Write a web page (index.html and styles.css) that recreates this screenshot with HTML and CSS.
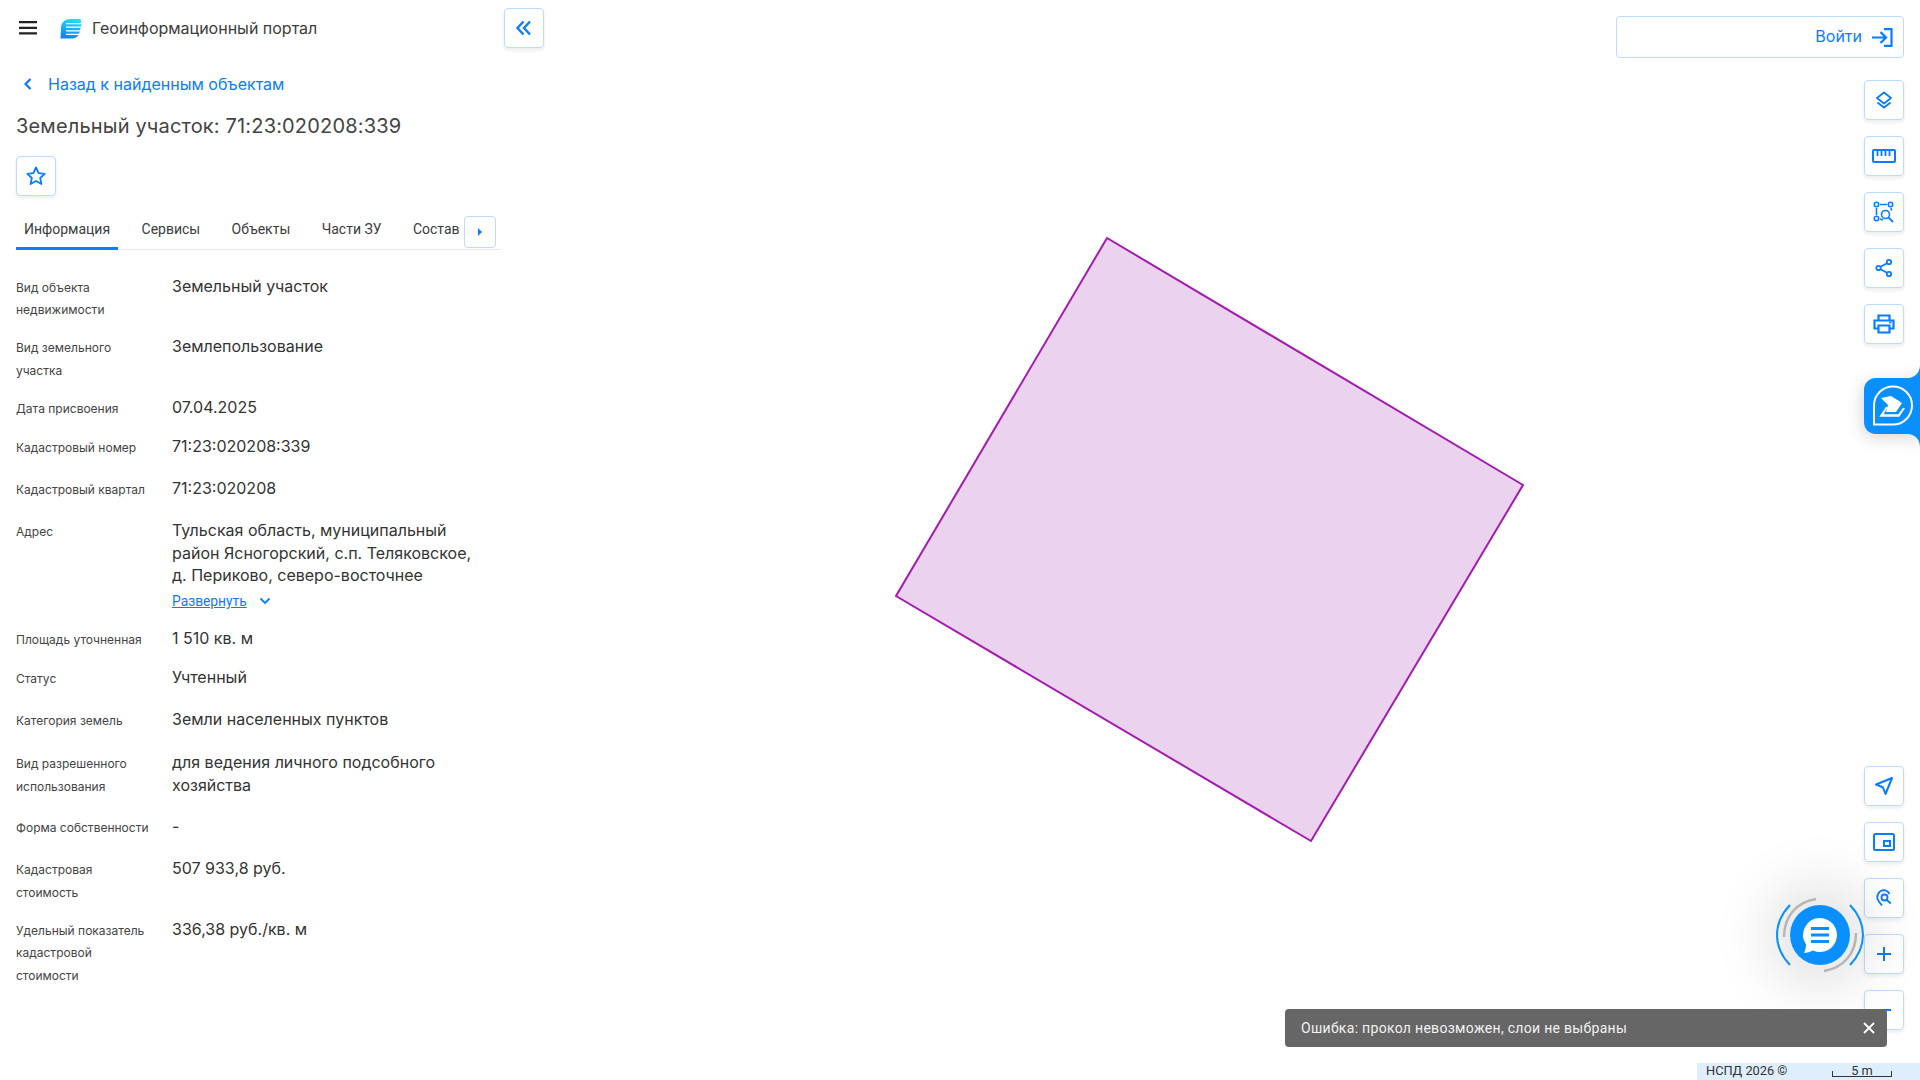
FILE: index.html
```html
<!doctype html>
<html>
    <head>
        <meta charset="utf-8">
        <title>Геоинформационный портал</title>
        <link rel="stylesheet" href="styles.css">
    </head>
    <body>
        <div class="panel">
            <div class="top_bar">
                <svg class="menu_icon" width="18" height="14" viewBox="0 0 18 14"><path d="M0 1.200h18M0 6.800h18M0 12.400h18" stroke="#222" stroke-width="2.300"/></svg>
                <svg class="logo" width="22" height="21" viewBox="0 0 22 21">
                    <defs><linearGradient id="logo_grad" x1="0.600" y1="0" x2="0.300" y2="1"><stop offset="0" stop-color="#22e0ee"/><stop offset="1" stop-color="#0a80ff"/></linearGradient></defs>
                    <path d="M20.500 1H10.500C5 1 1.500 4.500 1 9L.5 20.500H12C15.500 20.500 18 18.500 19 16L20 12.500 21.500 6.500Z" fill="url(#logo_grad)"/>
                    <path d="M6 5.600H22M6 9.200H22M6 12.800H22M6 16.400H22" stroke="#fff" stroke-width="1.200"/>
                </svg>
                <span class="portal_name">Геоинформационный портал</span>
            </div>
            <a class="back_link">
                <svg width="10" height="14" viewBox="0 0 10 14"><path d="M7.500 2L2.500 7l5 5" fill="none" stroke="#0a7cff" stroke-width="2.200"/></svg>
                <span>Назад к найденным объектам</span>
            </a>
            <h1 class="object_title">Земельный участок: 71:23:020208:339</h1>
            <div class="icon_btn star_btn">
                <svg width="22" height="22" viewBox="0 0 22 22"><path d="M11 2.500l2.600 5.600 6.100.7-4.500 4.200 1.200 6-5.400-3-5.400 3 1.200-6-4.500-4.200 6.100-.7z" fill="none" stroke="#0a7cff" stroke-width="1.800" stroke-linejoin="round"/></svg>
            </div>
            <div class="tabs">
                <div class="tab tab_active">Информация</div>
                <div class="tab">Сервисы</div>
                <div class="tab">Объекты</div>
                <div class="tab">Части ЗУ</div>
                <div class="tab tab_clipped">Состав</div>
                <div class="tabs_next">
                    <svg width="6" height="10" viewBox="0 0 6 10"><path d="M1 1l4 4-4 4z" fill="#0a7cff"/></svg>
                </div>
            </div>
            <div class="info_list">
                <div class="row">
                    <div class="row_label">Вид объекта<br>недвижимости</div>
                    <div class="row_value">Земельный участок</div>
                </div>
                <div class="row">
                    <div class="row_label">Вид земельного<br>участка</div>
                    <div class="row_value">Землепользование</div>
                </div>
                <div class="row">
                    <div class="row_label">Дата присвоения</div>
                    <div class="row_value">07.04.2025</div>
                </div>
                <div class="row row_tall">
                    <div class="row_label">Кадастровый номер</div>
                    <div class="row_value">71:23:020208:339</div>
                </div>
                <div class="row row_tall">
                    <div class="row_label">Кадастровый квартал</div>
                    <div class="row_value">71:23:020208</div>
                </div>
                <div class="row">
                    <div class="row_label">Адрес</div>
                    <div class="row_value">
                        Тульская область, муниципальный район Ясногорский, с.п. Теляковское, д. Периково, северо-восточнее
                        <div class="expand">
                            <a class="expand_link">Развернуть</a>
                            <svg width="12" height="8" viewBox="0 0 12 8"><path d="M1.500 1.500L6 6l4.500-4.500" fill="none" stroke="#0a7cff" stroke-width="1.800"/></svg>
                        </div>
                    </div>
                </div>
                <div class="row">
                    <div class="row_label">Площадь уточненная</div>
                    <div class="row_value">1 510 кв. м</div>
                </div>
                <div class="row row_tall">
                    <div class="row_label">Статус</div>
                    <div class="row_value">Учтенный</div>
                </div>
                <div class="row row_loose">
                    <div class="row_label">Категория земель</div>
                    <div class="row_value">Земли населенных пунктов</div>
                </div>
                <div class="row row_wide">
                    <div class="row_label">Вид разрешенного<br>использования</div>
                    <div class="row_value">для ведения личного подсобного хозяйства</div>
                </div>
                <div class="row row_tall">
                    <div class="row_label">Форма собственности</div>
                    <div class="row_value">-</div>
                </div>
                <div class="row">
                    <div class="row_label">Кадастровая<br>стоимость</div>
                    <div class="row_value">507 933,8 руб.</div>
                </div>
                <div class="row">
                    <div class="row_label">Удельный показатель<br>кадастровой<br>стоимости</div>
                    <div class="row_value">336,38 руб./кв. м</div>
                </div>
            </div>
        </div>

        <div class="map">
            <svg class="parcel" width="1920" height="1080" viewBox="0 0 1920 1080">
                <polygon points="1107,238 1523,485 1311,841 896,596" fill="#ebd3ef" stroke="#a31caf" stroke-width="2"/>
            </svg>

            <div class="icon_btn collapse_btn">
                <svg width="20" height="20" viewBox="0 0 20 20"><path d="M9.500 3.500L3.500 10l6 6.500M16 3.500L10 10l6 6.500" fill="none" stroke="#0a7cff" stroke-width="2.400"/></svg>
            </div>

            <div class="login_btn">
                <span class="login_text">Войти</span>
                <svg width="21" height="19" viewBox="0 0 21 19"><path d="M0 9.500h13M8.500 4l5.500 5.500L8.500 15M12 1.200h7.500v16.600H12" fill="none" stroke="#0a7cff" stroke-width="2.200"/></svg>
            </div>

            <div class="tool_stack tools_top">
                <div class="icon_btn">
                    <svg width="18" height="18" viewBox="0 0 18 18"><path d="M9 1.500L16 7l-7 5.500L2 7z" fill="none" stroke="#0a7cff" stroke-width="1.800" stroke-linejoin="round"/><path d="M2.500 11.500L9 16.500l6.500-5" fill="none" stroke="#0a7cff" stroke-width="1.800"/></svg>
                </div>
                <div class="icon_btn">
                    <svg width="24" height="14" viewBox="0 0 24 14"><rect x="1" y="1" width="22" height="12" rx="1" fill="none" stroke="#0a7cff" stroke-width="2"/><path d="M5.500 2v5M9.500 2v5M13.500 2v5M17.500 2v5" stroke="#0a7cff" stroke-width="1.800"/></svg>
                </div>
                <div class="icon_btn">
                    <svg width="22" height="22" viewBox="0 0 22 22" fill="none" stroke="#0a7cff" stroke-width="1.600"><circle cx="3.500" cy="3.500" r="2.200"/><circle cx="17.500" cy="3.500" r="2.200"/><circle cx="3.500" cy="17.500" r="2.200"/><path d="M7 3.500h7M3.500 7v7M18 7l.5 2.500M7 18l3 1"/><circle cx="12.500" cy="13.500" r="4"/><path d="M15.500 16.500l4.500 4.500" stroke-width="1.800"/></svg>
                </div>
                <div class="icon_btn">
                    <svg width="18" height="20" viewBox="0 0 18 20" fill="none" stroke="#0a7cff" stroke-width="1.800"><circle cx="14" cy="4" r="2.200"/><circle cx="14" cy="16" r="2.200"/><circle cx="3.500" cy="10" r="2.200"/><path d="M12 5.200L5.500 8.800M5.500 11.200l6.500 3.600"/></svg>
                </div>
                <div class="icon_btn">
                    <svg width="22" height="20" viewBox="0 0 22 20" fill="none" stroke="#0a7cff" stroke-width="2.200"><path d="M5.500 6V1.500h11V6M5.500 14.500H1.500V6.500h19v8h-4"/><path d="M5.500 11.500h11v7h-11z"/><path d="M16 8.500h2.500" stroke-width="1.600"/></svg>
                </div>
            </div>

            <div class="gos_badge">
                <svg width="56" height="82" viewBox="0 0 56 82">
                    <path d="M56 0V82C56 74 50 69 44 69H12C5 69 0 64 0 57V25C0 18 5 13 12 13H44C50 13 56 8 56 0Z" fill="#0a8fff"/>
                    <path d="M10 59.500V40.500A19 19 0 1 1 29 59.500Z" fill="none" stroke="#fff" stroke-width="2"/>
                    <path d="M17 33L27 31 35 36 38 38 32 47H22L24 40Z" fill="#fff"/>
                    <path d="M22 41.700L15.300 51.700H35.300L41 43.300 39 42.700 34.300 49.300H19.700L23.700 42.300Z" fill="#fff"/>
                </svg>
            </div>

            <div class="tool_stack tools_bottom">
                <div class="icon_btn">
                    <svg width="20" height="20" viewBox="0 0 20 20"><path d="M18 2L2 8.500l6.800 2.700L11.500 18z" fill="none" stroke="#0a7cff" stroke-width="2" stroke-linejoin="round"/></svg>
                </div>
                <div class="icon_btn">
                    <svg width="22" height="18" viewBox="0 0 22 18" fill="none" stroke="#0a7cff"><rect x="1" y="1" width="20" height="16" rx="1.500" stroke-width="2"/><rect x="11" y="8" width="6" height="5" stroke-width="2"/></svg>
                </div>
                <div class="icon_btn">
                    <svg width="18" height="20" viewBox="0 0 18 20" fill="none" stroke="#0a7cff" stroke-width="1.800"><path d="M7 17.500L3.500 13A7 7 0 0 1 8.500 2.200 7 7 0 0 1 14.500 6"/><circle cx="9.500" cy="9.500" r="3"/><path d="M11.800 12l4 3.500"/></svg>
                </div>
                <div class="icon_btn">
                    <svg width="16" height="16" viewBox="0 0 16 16"><path d="M8 1v14M1 8h14" stroke="#0a7cff" stroke-width="2"/></svg>
                </div>
                <div class="icon_btn">
                    <svg width="16" height="16" viewBox="0 0 16 16"><path d="M1 8h14" stroke="#0a7cff" stroke-width="2"/></svg>
                </div>
            </div>

            <div class="chat_btn">
                <svg width="100" height="90" viewBox="0 0 100 90">
                    <path d="M20 15C2.700 33 2.700 57 20 75M80 15C97.300 33 97.300 57 80 75" fill="none" stroke="#0a8fff" stroke-width="2"/>
                    <path d="M46 9C27 12 14 26 14 47M54 81C73 78 86 64 86 43" fill="none" stroke="#b5b5b5" stroke-width="2.500"/>
                    <circle cx="50" cy="45" r="30" fill="#0a8fff"/>
                    <path d="M50 28A17 17 0 1 1 43 60.500C40 62 37 63 34 63 35.500 60 36 57 36 54.500A17 17 0 0 1 50 28Z" fill="#fff"/>
                    <path d="M41 38.500H59M41 45H59M41 51.500H59" stroke="#0a8fff" stroke-width="3"/>
                </svg>
            </div>

            <div class="toast">
                <span>Ошибка: прокол невозможен, слои не выбраны</span>
                <svg width="14" height="14" viewBox="0 0 14 14"><path d="M2 2l10 10M12 2L2 12" stroke="#fff" stroke-width="1.800"/></svg>
            </div>

            <div class="status_bar">
                <span class="copyright">НСПД 2026 ©</span>
                <span class="scale_line">5 m</span>
            </div>
        </div>
    </body>
</html>
```

FILE: styles.css
```css
html, body {
    margin:0;
    height:100%;
    overflow:hidden;
}

body {
    font-family:Inter, "Noto Sans", sans-serif;
    background-color:#ffffff;
    color:#333333;
    display:flex;
}

.panel {
    width:484px;
    padding:0 0 0 16px;
    flex:none;
    position:relative;
    z-index:1;
}

.top_bar {
    height:56px;
    display:flex;
    align-items:center;
}

.menu_icon {
    margin-left:3px;
    margin-right:23px;
}

.logo {
    margin-right:10px;
}

.portal_name {
    font-size:16px;
    color:#3c3c3c;
}

.back_link {
    height:24px;
    margin-top:16px;
    display:flex;
    align-items:center;
    font-size:16px;
    color:#0a7cff;
}

.back_link svg {
    margin-left:7px;
    margin-right:15px;
}

.object_title {
    margin:16px 0 0 0;
    font-size:20px;
    line-height:28px;
    font-weight:400;
    letter-spacing:0.17px;
    color:#444444;
}

.icon_btn {
    width:40px;
    height:40px;
    box-sizing:border-box;
    display:flex;
    align-items:center;
    justify-content:center;
    background-color:#ffffff;
    border:1px solid #bcdcff;
    border-radius:4px;
    box-shadow:0 2px 4px rgba(0, 0, 0, 0.08);
}

.star_btn {
    margin-top:16px;
}

.tabs {
    height:38px;
    margin-top:15px;
    display:flex;
    gap:15.4px;
    position:relative;
    border-bottom:1px solid #e6e8eb;
    font-family:Roboto, sans-serif;
    font-size:14px;
    color:#3c3c3c;
}

.tab {
    padding:10px 8px 0 8px;
}

.tab_active {
    border-bottom:3px solid #0a7cff;
    height:26px;
    margin-bottom:-1px;
}

.tab_clipped {
    width:46px;
    overflow:hidden;
    padding-right:0;
}

.tabs_next {
    width:32px;
    height:32px;
    box-sizing:border-box;
    position:absolute;
    top:5px;
    left:448px;
    display:flex;
    align-items:center;
    justify-content:center;
    background-color:#ffffff;
    border:1px solid #bcdcff;
    border-radius:4px;
}

.info_list {
    padding-top:24.5px;
}

.row {
    display:grid;
    grid-template-columns:156px 300px;
    min-height:24px;
    margin-bottom:15px;
}

.row_tall {
    min-height:27px;
}

.row_loose {
    min-height:25px;
    margin-bottom:18px;
}

.row_wide {
    margin-bottom:18px;
}

.row_label {
    padding-top:2px;
    margin-bottom:-1px;
    font-size:12px;
    line-height:22.4px;
    color:#444444;
}

.row_value {
    font-size:16px;
    line-height:22.4px;
    color:#333333;
}

.expand {
    height:22px;
    padding-top:4px;
    display:flex;
    align-items:center;
    gap:12px;
}

.expand_link {
    font-family:Roboto, sans-serif;
    font-size:13.8px;
    color:#0a7cff;
    text-decoration:underline;
}

/* everything below floats on the map */
.map {
    flex:1;
    position:relative;
}

.parcel {
    position:absolute;
    top:0;
    right:0;
}

.collapse_btn {
    position:absolute;
    top:8px;
    left:4px;
}

.login_btn {
    position:absolute;
    top:16px;
    right:16px;
    width:288px;
    height:42px;
    box-sizing:border-box;
    padding-right:10px;
    display:flex;
    align-items:center;
    justify-content:flex-end;
    gap:10px;
    background-color:#ffffff;
    border:1px solid #bcdcff;
    border-radius:4px;
    font-size:16px;
    color:#0a7cff;
}

.login_text {
    padding-bottom:2px;
}

.tool_stack {
    position:absolute;
    right:16px;
    display:flex;
    flex-direction:column;
    gap:16px;
}

.tools_top {
    top:80px;
}

.tools_bottom {
    top:766px;
}

.gos_badge {
    position:absolute;
    top:365px;
    right:0;
    height:82px;
    filter:drop-shadow(-2px 4px 8px rgba(0, 0, 0, 0.15));
}

.chat_btn {
    position:absolute;
    top:890px;
    left:1270px;
    width:100px;
    height:90px;
}

.chat_btn::before {
    content:"";
    position:absolute;
    top:15px;
    left:20px;
    width:60px;
    height:60px;
    border-radius:50%;
    box-shadow:0 0 60px 20px rgba(0, 0, 0, 0.13);
}

.chat_btn svg {
    position:relative;
}

.toast {
    position:absolute;
    top:1009px;
    left:785px;
    width:602px;
    height:38px;
    box-sizing:border-box;
    padding:0 11px 0 16px;
    display:flex;
    align-items:center;
    justify-content:space-between;
    background-color:#666666;
    border-radius:4px;
    font-family:Roboto, sans-serif;
    font-size:14px;
    letter-spacing:0.3px;
    color:#f2f2f2;
}

.status_bar {
    position:absolute;
    top:1063px;
    right:0;
    width:223px;
    height:17px;
    display:flex;
    background-color:#deeefc;
    font-family:Roboto, sans-serif;
    font-size:12.8px;
    line-height:16px;
    color:#333333;
}

.copyright {
    margin-left:9px;
    width:126px;
}

.scale_line {
    width:60px;
    height:13px;
    position:relative;
    border-bottom:1px solid #333333;
    text-align:center;
    line-height:15px;
}

.scale_line::after {
    content:"";
    position:absolute;
    left:0;
    right:0;
    bottom:0;
    height:5px;
    border-left:1px solid #333333;
    border-right:1px solid #333333;
}
```
